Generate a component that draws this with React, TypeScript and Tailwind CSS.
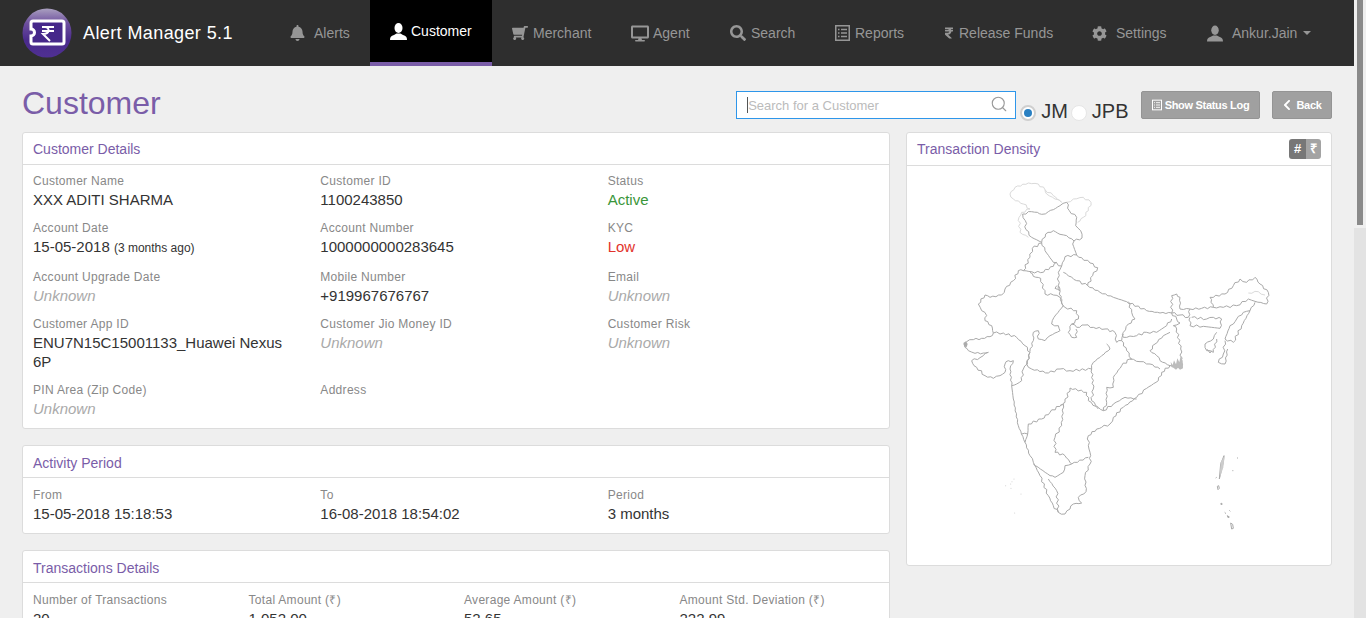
import React from 'react'
import { FaBell, FaShoppingCart, FaDesktop, FaSearch, FaRupeeSign, FaCog, FaChevronLeft } from 'react-icons/fa'
import { Search } from 'lucide-react'

function UserIcon({ className }: { className?: string }) {
  return (
    <svg viewBox="0 0 17 17" fill="currentColor" className={className}>
      <ellipse cx="8.5" cy="5" rx="4" ry="5" />
      <path d="M0 17 C0 14 1 13 4 12 L6.5 10.5 H10.5 L13 12 C16 13 17 14 17 17 Z" />
    </svg>
  )
}

function ListIcon({ className }: { className?: string }) {
  return (
    <svg viewBox="0 0 15 16" fill="none" stroke="currentColor" className={className}>
      <rect x="0.75" y="0.75" width="13.5" height="14.5" strokeWidth="1.5" />
      <path d="M3 4.5 H4.5 M6 4.5 H12 M3 8 H4.5 M6 8 H12 M3 11.5 H4.5 M6 11.5 H12" strokeWidth="1.3" />
    </svg>
  )
}

const navItems = [
  { label: 'Alerts', icon: <FaBell className="w-[15px] h-[16px]" />, cls: 'w-[100px] gap-[9px]' },
  { label: 'Customer', icon: <UserIcon className="w-[17px] h-[17px]" />, cls: 'w-[122px] gap-[4px]', active: true },
  { label: 'Merchant', icon: <FaShoppingCart className="w-[16px] h-[16px] -scale-x-100" />, cls: 'w-[119px] gap-[5px]' },
  { label: 'Agent', icon: <FaDesktop className="w-[18px] h-[17px]" />, cls: 'w-[99px] gap-[4px]' },
  { label: 'Search', icon: <FaSearch className="w-[16px] h-[16px]" />, cls: 'w-[105px] gap-[5px]' },
  { label: 'Reports', icon: <ListIcon className="w-[15px] h-[16px]" />, cls: 'w-[110px] gap-[5px]' },
  { label: 'Release Funds', icon: <FaRupeeSign className="w-[8px] h-[14px]" />, cls: 'w-[147px] gap-[6px]' },
  { label: 'Settings', icon: <FaCog className="w-[15px] h-[15px]" />, cls: 'w-[115px] gap-[9px]' },
]

const darkPaths = [
  // J&K
  'M218 135 L245 128 L262 130 L275 136 L295 128 L310 122 L330 110 L350 100 L358 125 L380 145 L377 170 L392 185 L396 207 L372 216 L350 200 L330 196 L310 185 L287 195 L275 220 L245 205 L228 182 L226 155 L218 135',
  // Himachal, Uttarakhand
  'M275 220 L285 245 L310 280 L335 291 L345 263 L380 258 L368 225 L372 216',
  'M380 258 L395 266 L420 282 L443 296 L428 320 L413 350',
  // Punjab, Haryana
  'M275 222 L247 238 L240 265 L220 305 L245 308 L272 311 L310 292 L320 280',
  'M240 310 L250 322 L272 328 L285 375 L310 378 L330 385 L340 410 L312 445 L305 465 L325 470 L330 485 L300 500 L285 515 L265 510 L265 485 L250 490 L250 515 L240 548',
  // Rajasthan west and Gujarat
  'M220 305 L205 305 L190 335 L165 360 L155 378 L120 385 L105 378 L85 405 L95 425 L110 440 L105 455 L125 470 L130 492 L160 492 L200 505 L225 530 L240 550 L232 585 L220 600 L215 635 L200 645 L185 650',
  // West and south coast, east coast
  'M130 492 L120 503 L95 508 L70 512 L50 518 L42 525 L45 535 L55 545 L75 553 L100 552 L115 550 L100 560 L90 566 L65 575 L72 590 L80 595 L105 620 L130 628 L150 620 L165 610 L165 585 L175 575 L190 575 L182 590 L180 600 L185 650 L190 690 L205 770 L225 820 L240 860 L250 880 L270 920 L295 980 L310 1010 L325 1030 L345 1035 L360 1020 L370 1005 L395 1002 L385 985 L408 968 L405 920 L420 885 L422 860 L415 830 L415 800 L440 780 L455 775 L480 765 L490 745 L520 715 L560 685 L590 658 L625 635 L635 610 L660 590 L680 595 L695 595 L692 540 L680 480 L670 470 L690 462 L680 450 L665 432',
  // UP
  'M335 291 L325 310 L325 350 L335 400 L345 415 L380 425 L385 450 L365 465 L380 475 L405 468 L430 475 L465 480 L495 490 L500 520 L515 515 L520 495',
  'M340 310 L380 335 L413 350 L450 370 L490 385 L530 398 L590 425 L630 432 L665 432 L665 380 L680 375 L690 385 L690 420 L720 420 L715 445 L690 438 L665 432',
  'M320 350 L315 358 L330 365 L325 350',
  'M365 465 L355 490 L365 505 L380 505 L378 480',
  // Bihar, Jharkhand
  'M535 398 L545 430 L555 450 L535 465 L520 490 L520 505 L560 500 L590 490 L620 490 L650 470 L665 450',
  'M515 515 L530 545 L545 570 L540 570 L515 590 L490 625 L490 655 L470 655 L470 700 L460 725 L490 705 L525 685 L560 690',
  'M660 490 L640 500 L615 525 L600 545 L620 560 L630 575 L660 590',
  'M540 570 L570 578 L600 585 L630 600',
  // North-east
  'M720 420 L755 418 L790 415 L780 385 L825 375 L850 350 L870 330 L890 340 L915 325 L930 345 L955 370 L950 405 L915 397 L895 390 L860 410 L820 415 L790 415',
  'M915 400 L900 425 L880 430 L860 450 L850 465 L840 470 L825 510 L850 520 L875 470 L900 425',
  'M720 445 L720 470 L760 472 L810 478 L815 450 L790 445 L770 450 L725 445',
  'M800 490 L790 510 L765 525 L770 545 L790 550 L800 510',
  'M825 515 L820 555 L805 580 L825 585 L833 540',
  'M770 540 L780 552 L785 545',
  // Maharashtra north, Chhattisgarh
  'M240 550 L230 585 L245 600 L295 612 L330 600 L360 605 L425 600 L430 580 L455 560 L480 540 L470 525',
  'M425 600 L430 660 L425 695 L445 715 L460 725',
  // Telangana, Karnataka, AP
  'M360 657 L345 700 L335 710',
  'M360 657 L410 670 L415 695 L445 720',
  'M335 705 L300 730 L275 750 L235 765 L233 795 L215 795',
  'M233 795 L225 820',
  'M340 705 L335 770 L315 805 L315 850 L345 860 L365 885 L415 865',
  'M250 885 L300 920 L315 925 L340 910 L345 890 L365 885',
  'M295 930 L320 965 L325 1030',
]

const islandPaths = [
  'M822 860 L812 885 L808 930 L820 880 Z',
  'M802 952 L806 950 L808 958 L804 962 Z',
  'M842 1062 L848 1066 L850 1078 L845 1080 Z',
  'M813 1002 L817 1005 L813 1007 Z',
  'M832 1040 L838 1044 L834 1046 Z',
  'M824 1030 L828 1034',
  'M838 1024 L841 1027',
  'M797 927 L800 925',
  'M861 867 L864 867',
  'M847 905 L850 905',
]

const lightPaths = [
  'M180 75 L195 55 L235 42 L265 45 L285 62 L310 80 L335 100',
  'M285 62 L290 75 L315 90 L335 100',
  'M180 75 L190 90 L220 105 L240 120 L215 130 L207 145 L210 190 L235 205',
  'M350 100 L370 90 L400 85 L423 100 L415 125 L400 145 L383 160',
  'M895 372 L925 368 L945 378',
]

const dots = [
  [167, 950], [182, 945], [192, 930], [183, 958], [213, 975], [194, 1032], [186, 938],
]

// borders are not straight, break long segments up and shake them a bit
function wiggle(d: string) {
  const pts = d.replace(/[ML]/g, '').trim().split(/\s+/).map(Number)
  let out = `M${pts[0]} ${pts[1]}`
  for (let i = 2; i + 1 < pts.length; i += 2) {
    const [x0, y0, x1, y1] = [pts[i - 2], pts[i - 1], pts[i], pts[i + 1]]
    const len = Math.hypot(x1 - x0, y1 - y0)
    const steps = Math.max(1, Math.round(len / 9))
    for (let s = 1; s <= steps; s++) {
      const t = s / steps
      const n = s === steps ? 0 : Math.sin((x0 + s) * 12.9 + (y1 + s) * 78.2) * 3.2
      out += ` L${(x0 + (x1 - x0) * t - ((y1 - y0) / len) * n).toFixed(1)} ${(y0 + (y1 - y0) * t + ((x1 - x0) / len) * n).toFixed(1)}`
    }
  }
  return out
}

function IndiaMap() {
  return (
    <svg viewBox="0 0 990 1110" className="block w-[330px] h-[370px] ml-[43px] mt-[3px]">
      <g fill="none" stroke="#dadada" strokeWidth="3" strokeLinejoin="round">
        {lightPaths.map((d, i) => (
          <path key={i} d={wiggle(d)} />
        ))}
      </g>
      <g fill="none" stroke="#a9a9a9" strokeWidth="3" strokeLinejoin="round">
        {darkPaths.map((d, i) => (
          <path key={i} d={wiggle(d)} />
        ))}
        {islandPaths.map((d, i) => (
          <path key={i} d={d} />
        ))}
      </g>
      <path
        d="M662 578 L668 588 L672 574 L678 586 L682 568 L688 580 L692 560 L698 575 L699 598 L690 602 L684 596 L678 602 L670 596 L664 594 Z"
        fill="#bcbcbc"
      />
      <path d="M40 522 L48 517 L53 525 L50 534 L44 533 Z" fill="#ababab" />
      <path d="M812 880 L824 860 L820 895 L810 925 Z" fill="#cccccc" />
      {dots.map(([x, y], i) => (
        <circle key={i} cx={x} cy={y} r="1.6" fill="#cccccc" />
      ))}
    </svg>
  )
}

function Logo() {
  return (
    <svg viewBox="0 0 50 50" className="w-[50px] h-[50px] shrink-0">
      <defs>
        <linearGradient id="logoBg" x1="0" y1="0" x2="0" y2="1">
          <stop offset="0" stopColor="#aaa0c0" />
          <stop offset="0.3" stopColor="#6d4f9e" />
          <stop offset="0.65" stopColor="#4a2a8c" />
          <stop offset="1" stopColor="#4f3093" />
        </linearGradient>
      </defs>
      <circle cx="25" cy="25" r="24.5" fill="url(#logoBg)" />
      <path
        d="M9 15 a2 2 0 0 1 2 -2 h29 a2 2 0 0 1 2 2 v19 a2 2 0 0 1 -2 2 h-29 a2 2 0 0 1 -2 -2 v-6 a3.5 3.5 0 0 0 0 -7 Z"
        fill="#46288a"
        stroke="#fff"
        strokeWidth="3"
      />
      <path d="M20 19 h12 M20 23 h12 M23 19 c5 0 5 7 -2 7 l7 7" fill="none" stroke="#fff" strokeWidth="2" />
    </svg>
  )
}

function Panel({ title, extra, className, headerClass, children }: { title: string; extra?: React.ReactNode; className?: string; headerClass?: string; children: React.ReactNode }) {
  return (
    <section className={`bg-white border border-[#dcdcdc] rounded-[3px] ${className ?? ''}`}>
      <div className={`${headerClass ?? 'h-[32px] pt-[2px]'} flex items-center justify-between pl-[10px] pr-[10px] border-b border-[#dcdcdc] text-[14px] text-[#7a5da8]`}>
        <span>{title}</span>
        {extra}
      </div>
      {children}
    </section>
  )
}

function Field({ label, children }: { label: string; children?: React.ReactNode }) {
  return (
    <div className="pr-[20px]">
      <div className="text-[12px] leading-[17px] tracking-[0.3px] text-[#888888]">{label}</div>
      <div className="text-[15px] leading-[19px] text-[#333333]">{children}</div>
    </div>
  )
}

const Unknown = () => <span className="italic text-[#aaaaaa]">Unknown</span>

export default function App() {
  return (
    <div className="flex h-[618px] w-[1366px] overflow-hidden bg-[#efefef] font-['Liberation_Sans',Arial,sans-serif]">
      <div className="w-[1354px] shrink-0">
        <header className="h-[66px] flex bg-[#2e2e2e] text-[14px]">
          <div className="w-[270px] shrink-0 flex items-center pl-[22px] gap-[11px]">
            <Logo />
            <span className="pt-[1px] text-white text-[18px] tracking-[0.4px]">Alert Manager 5.1</span>
          </div>
          {navItems.map((item) =>
            item.active ? (
              <div key={item.label} className={`pl-5 flex items-center bg-black border-b-4 border-[#7a5da8] text-white ${item.cls}`}>
                {item.icon}
                <span>{item.label}</span>
              </div>
            ) : (
              <div key={item.label} className={`pl-5 flex items-center text-[#969696] ${item.cls}`}>
                {item.icon}
                <span>{item.label}</span>
              </div>
            )
          )}
          <div className="pl-5 flex items-center gap-[9px] text-[#969696]">
            <UserIcon className="w-[16px] h-[17px]" />
            <span>Ankur.Jain</span>
            <span className="ml-[-3px] border-x-[4px] border-x-transparent border-t-[4px] border-t-[#969696]" />
          </div>
        </header>

        <main className="px-[22px]">
          <div className="flex h-[66px] items-start">
            <h1 className="text-[32px] leading-[36px] mt-[19px] text-[#7a5da8]">Customer</h1>
            <div className="relative ml-auto mt-[25px] w-[280px] h-[28px]">
              <input
                readOnly
                placeholder="Search for a Customer"
                className="w-full h-full bg-white border border-[#2e96ea] pl-[11px] pr-[30px] text-[13px] text-[#333333] placeholder:text-[#bbbbbb] outline-none"
              />
              <span className="absolute left-[11px] top-[6px] w-px h-[16px] bg-[#555555]" />
              <Search className="absolute right-[8px] top-[4px] w-[18px] h-[18px] text-[#999999]" strokeWidth={1.5} />
            </div>
            <div className="flex items-center mt-[33px] ml-[4px] text-[20px] leading-[24px] text-[#333333]">
              <span className="w-[16px] h-[16px] rounded-full border-2 border-[#cfcfcf] bg-white flex items-center justify-center mt-[3px]">
                <span className="w-[8px] h-[8px] rounded-full bg-[#2a80c2]" />
              </span>
              <span className="ml-[5px]">JM</span>
              <span className="ml-[3px] w-[16px] h-[16px] rounded-full border border-[#e6e6e6] bg-white mt-[3px]" />
              <span className="ml-[5px]">JPB</span>
            </div>
            <button className="ml-[12.5px] mt-[25px] w-[119px] h-[28px] flex items-center justify-center gap-[3px] rounded-[2px] bg-[#a0a0a0] border border-[#949494] text-white text-[11px] tracking-[-0.3px] font-bold">
              <ListIcon className="w-[10px] h-[12px]" />
              Show Status Log
            </button>
            <button className="ml-[12px] mt-[25px] w-[60px] h-[28px] flex items-center justify-center gap-[4px] rounded-[2px] bg-[#a0a0a0] border border-[#949494] text-white text-[11px] tracking-[-0.3px] font-bold">
              <FaChevronLeft className="w-[10px] h-[12px]" />
              Back
            </button>
          </div>

          <div className="flex gap-4 items-start">
            <div className="w-[868px] shrink-0 flex flex-col gap-4">
              <Panel title="Customer Details">
                <div className="grid grid-cols-3 grid-rows-[47px_49px_47px_66px_auto] pl-[10px] pt-[8px] pb-[10px] w-[872px]">
                  <Field label="Customer Name">XXX ADITI SHARMA</Field>
                  <Field label="Customer ID">1100243850</Field>
                  <Field label="Status"><span className="text-[#3a963a]">Active</span></Field>
                  <Field label="Account Date">
                    15-05-2018 <span className="text-[12px]">(3 months ago)</span>
                  </Field>
                  <Field label="Account Number">1000000000283645</Field>
                  <Field label="KYC"><span className="text-[#e2332b]">Low</span></Field>
                  <Field label="Account Upgrade Date"><Unknown /></Field>
                  <Field label="Mobile Number">+919967676767</Field>
                  <Field label="Email"><Unknown /></Field>
                  <Field label="Customer App ID">ENU7N15C15001133_Huawei Nexus 6P</Field>
                  <Field label="Customer Jio Money ID"><Unknown /></Field>
                  <Field label="Customer Risk"><Unknown /></Field>
                  <Field label="PIN Area (Zip Code)"><Unknown /></Field>
                  <Field label="Address" />
                </div>
              </Panel>
              <Panel title="Activity Period" headerClass="h-[32px] pt-[3px]">
                <div className="grid grid-cols-3 pl-[10px] pt-[9px] pb-[10px] w-[872px]">
                  <Field label="From">15-05-2018 15:18:53</Field>
                  <Field label="To">16-08-2018 18:54:02</Field>
                  <Field label="Period">3 months</Field>
                </div>
              </Panel>
              <Panel title="Transactions Details" headerClass="h-[32px] pt-[3px]">
                <div className="grid grid-cols-4 pl-[10px] pt-[9px] pb-[10px] w-[872px]">
                  <Field label="Number of Transactions">20</Field>
                  <Field label="Total Amount (₹)">1,052.00</Field>
                  <Field label="Average Amount (₹)">52.65</Field>
                  <Field label="Amount Std. Deviation (₹)">222.99</Field>
                </div>
              </Panel>
            </div>

            <Panel
              title="Transaction Density"
              className="w-[426px] h-[434px]"
              headerClass="h-[33px]"
              extra={
                <div className="flex h-[20px] rounded-[3px] overflow-hidden text-white text-[13px] font-bold">
                  <span className="w-[17px] bg-[#777777] flex items-center justify-center">#</span>
                  <span className="w-[15px] bg-[#a3a3a3] flex items-center justify-center">₹</span>
                </div>
              }
            >
              <IndiaMap />
            </Panel>
          </div>
        </main>
      </div>

      <div className="w-[12px] shrink-0 flex flex-col">
        <div className="w-[6px] h-[225px] ml-[3px] bg-[#8a8a8a]" />
        <div className="mt-[3px] flex-1 bg-[#e3e3e3]" />
      </div>
    </div>
  )
}
